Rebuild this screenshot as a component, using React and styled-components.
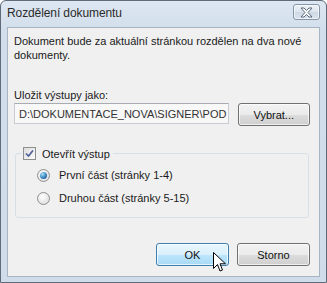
import React from 'react';
import styled, { createGlobalStyle } from 'styled-components';

const GlobalStyle = createGlobalStyle`
  html, body {
    margin: 0;
    padding: 0;
    background: #ffffff;
  }
  * {
    box-sizing: border-box;
  }
`;

const Window = styled.div`
  position: relative;
  width: 327px;
  height: 283px;
  display: flex;
  flex-direction: column;
  border: 1px solid #5f6b78;
  border-radius: 6px 6px 0 0;
  background: linear-gradient(#dde7f2, #d2deeb 30px, #d0dcea);
  font-family: 'Liberation Sans', Arial, sans-serif;
  overflow: hidden;
`;

const TitleBar = styled.div`
  height: 26px;
  flex: none;
  display: flex;
  align-items: center;
  padding: 0 6px 2px 6px;
`;

const Title = styled.span`
  font-size: 12px;
  color: #2b2b2b;
  letter-spacing: -0.1px;
`;

const CloseButton = styled.div`
  margin-left: auto;
  width: 27px;
  height: 16px;
  margin-top: -2px;
  border: 1px solid #8596a8;
  border-radius: 3px;
  background: linear-gradient(#eef2f7, #dce4ee 50%, #cfd9e5 51%, #d9e2ec);
  box-shadow: inset 0 0 0 1px rgba(255, 255, 255, 0.6);
  display: flex;
  align-items: center;
  justify-content: center;
`;

const Client = styled.div`
  flex: 1;
  margin: 0 6px 5px 6px;
  border: 1px solid #a7b4c3;
  background: #f0f0f0;
  padding: 6px 9px 0 6px;
  display: flex;
  flex-direction: column;
  font-size: 11px;
  color: #1a1a1a;
`;

const Message = styled.p`
  margin: 0;
  line-height: 14px;
  font-size: 11px;
`;

const FieldLabel = styled.div`
  margin-top: 26px;
  font-size: 11px;
  line-height: 14px;
`;

const PathRow = styled.div`
  margin-top: 1px;
  display: flex;
  align-items: flex-start;
  gap: 9px;
`;

const PathInput = styled.div`
  width: 216px;
  height: 21px;
  border: 1px solid #c9ccd2;
  border-top-color: #a9acb3;
  background: #f8f8f8;
  padding: 4px 3px 0 4px;
  font-size: 11px;
  color: #333;
  white-space: nowrap;
  overflow: hidden;
`;

const Button = styled.div`
  width: 73px;
  height: 23px;
  border: 1px solid ${(p) => (p.$hot ? '#3c7fb1' : '#707070')};
  border-radius: 3px;
  background: ${(p) =>
    p.$hot
      ? 'linear-gradient(#eaf6fd, #d9f0fc 50%, #bee6fd 51%, #a7d9f5)'
      : 'linear-gradient(#f2f2f2, #ebebeb 50%, #dddddd 51%, #cfcfcf)'};
  box-shadow: inset 0 0 0 1px rgba(255, 255, 255, 0.7);
  display: flex;
  align-items: center;
  justify-content: center;
  font-size: 11px;
  color: #111;
`;

const Group = styled.fieldset`
  margin: 21px 1px 0 1px;
  padding: 9px 0 12px 21px;
  border: 1px solid #d5dfe5;
  border-radius: 3px;
  display: flex;
  flex-direction: column;
  gap: 10px;
`;

const Legend = styled.legend`
  padding: 0 3px 0 2px;
  margin-left: -16px;
  display: flex;
  align-items: center;
  gap: 6px;
  font-size: 11px;
`;

const Box = styled.span`
  width: 13px;
  height: 13px;
  border: 1px solid #8e8f8f;
  background: linear-gradient(135deg, #dcdcdc, #fbfbfb);
  display: flex;
  align-items: center;
  justify-content: center;
`;

const Option = styled.label`
  display: flex;
  align-items: center;
  gap: 9px;
  font-size: 11px;
  line-height: 13px;
`;

const Radio = styled.span`
  width: 13px;
  height: 13px;
  border-radius: 50%;
  border: 1px solid #8e8f8f;
  background: radial-gradient(circle at 40% 35%, #ffffff, #d6d6d6);
  display: flex;
  align-items: center;
  justify-content: center;
  &::after {
    content: '';
    display: ${(p) => (p.$checked ? 'block' : 'none')};
    width: 7px;
    height: 7px;
    border-radius: 50%;
    background: radial-gradient(circle at 35% 30%, #a9e2f8, #2e7bb8 60%, #1f4f86);
  }
`;

const Footer = styled.div`
  margin-top: auto;
  margin-bottom: 10px;
  display: flex;
  justify-content: flex-end;
  gap: 8px;
`;

const Pointer = styled.svg`
  position: absolute;
  left: 212px;
  top: 251px;
`;

const CheckMark = () => (
  <svg width="9" height="9" viewBox="0 0 9 9">
    <path d="M1 4.5 L3.5 7 L8 1.5" fill="none" stroke="#4a5f97" strokeWidth="1.6" />
  </svg>
);

const CloseGlyph = () => (
  <svg width="13" height="11" viewBox="0 0 13 11">
    <path
      d="M1 1 H4 L6.5 3.5 L9 1 H12 L8 5.5 L12 10 H9 L6.5 7.5 L4 10 H1 L5 5.5 Z"
      fill="#ffffff"
      stroke="#5a6b7e"
      strokeWidth="1"
      strokeLinejoin="round"
    />
  </svg>
);

const App = () => (
  <>
    <GlobalStyle />
    <Window>
      <TitleBar>
        <Title>Rozdělení dokumentu</Title>
        <CloseButton>
          <CloseGlyph />
        </CloseButton>
      </TitleBar>
      <Client>
        <Message>
          Dokument bude za aktuální stránkou rozdělen na dva nové
          <br />
          dokumenty.
        </Message>
        <FieldLabel>Uložit výstupy jako:</FieldLabel>
        <PathRow>
          <PathInput>D:\DOKUMENTACE_NOVA\SIGNER\POD</PathInput>
          <Button>Vybrat...</Button>
        </PathRow>
        <Group>
          <Legend>
            <Box>
              <CheckMark />
            </Box>
            Otevřít výstup
          </Legend>
          <Option>
            <Radio $checked />
            První část (stránky 1-4)
          </Option>
          <Option>
            <Radio />
            Druhou část (stránky 5-15)
          </Option>
        </Group>
        <Footer>
          <Button $hot>OK</Button>
          <Button>Storno</Button>
        </Footer>
      </Client>
      <Pointer width="13" height="21" viewBox="0 0 13 21">
        <path
          d="M0.5 0.5 V16.5 L4.5 12.5 L7 19 L9.5 18 L7 11.8 H12.5 Z"
          fill="#ffffff"
          stroke="#000000"
          strokeWidth="1"
          strokeLinejoin="miter"
        />
      </Pointer>
    </Window>
  </>
);

export default App;
